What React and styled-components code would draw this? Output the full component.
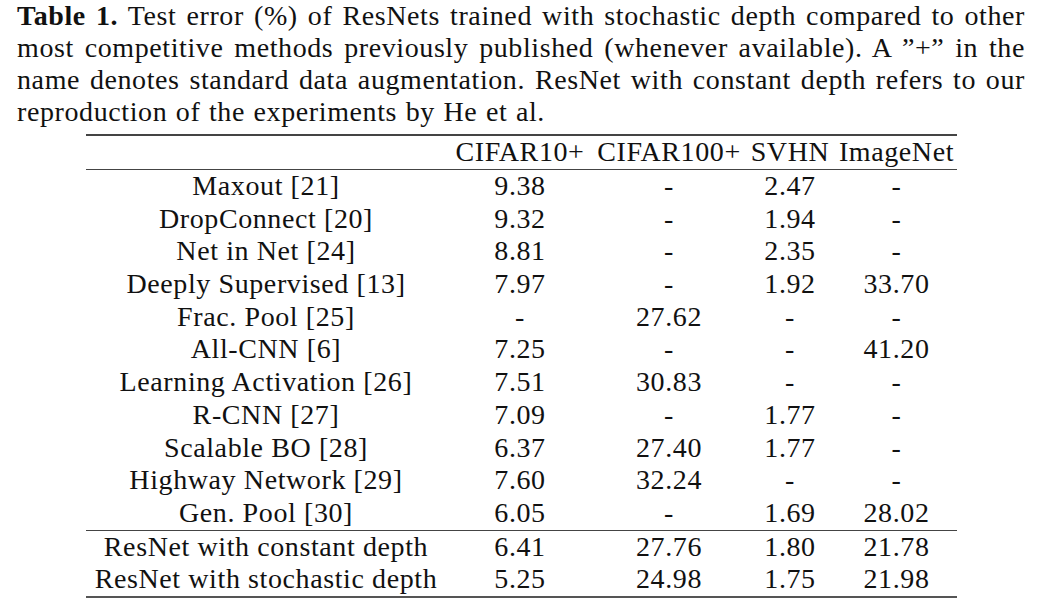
import React from 'react';
import styled, { createGlobalStyle } from 'styled-components';

const GlobalStyle = createGlobalStyle`
    html, body {
        margin: 0;
        padding: 0;
        background: #ffffff;
    }
    body {
        font-family: "Liberation Serif", "Times New Roman", serif;
        color: #111;
    }
`;

const Page = styled.div`
    width: 1044px;
    height: 605px;
    overflow: hidden;
    padding: 0 19px 0 17px;
    box-sizing: border-box;
    font-family: "Liberation Serif", "Times New Roman", serif;
`;

const Caption = styled.div`
    font-size: 28px;
    line-height: 32px;
    letter-spacing: 0.6px;
    word-spacing: 1px;
`;

const CaptionLine = styled.div`
    text-align: ${(p) => (p.$last ? 'left' : 'justify')};
    text-align-last: ${(p) => (p.$last ? 'left' : 'justify')};
    white-space: nowrap;
`;

const Bold = styled.b`
    font-weight: bold;
`;

// whole results table, laid out as a stack of grid rows
const Table = styled.div`
    margin: 6px 0 0 69px;
    width: 871px;
    font-size: 28px;
    letter-spacing: 0.6px;
    border-top: 2px solid #444;
    border-bottom: 2.5px solid #555;
`;

const Group = styled.div`
    border-top: ${(p) => (p.$rule ? '1.5px solid #444' : 'none')};
`;

const Row = styled.div`
    display: grid;
    grid-template-columns: 360px 148px 150px 92px 121px;
    align-items: center;
    height: ${(p) => (p.$head ? '33px' : '32.7px')};
`;

const Cell = styled.div`
    text-align: center;
    white-space: nowrap;
    padding-bottom: 5px;
`;

const captionLines = [
    <><Bold>Table 1.</Bold> Test error (%) of ResNets trained with stochastic depth compared to other</>,
    <>most competitive methods previously published (whenever available). A &rdquo;+&rdquo; in the</>,
    <>name denotes standard data augmentation. ResNet with constant depth refers to our</>,
    <>reproduction of the experiments by He et al.</>,
];

const header = ['', 'CIFAR10+', 'CIFAR100+', 'SVHN', 'ImageNet'];

const rows = [
    ['Maxout [21]', '9.38', '-', '2.47', '-'],
    ['DropConnect [20]', '9.32', '-', '1.94', '-'],
    ['Net in Net [24]', '8.81', '-', '2.35', '-'],
    ['Deeply Supervised [13]', '7.97', '-', '1.92', '33.70'],
    ['Frac. Pool [25]', '-', '27.62', '-', '-'],
    ['All-CNN [6]', '7.25', '-', '-', '41.20'],
    ['Learning Activation [26]', '7.51', '30.83', '-', '-'],
    ['R-CNN [27]', '7.09', '-', '1.77', '-'],
    ['Scalable BO [28]', '6.37', '27.40', '1.77', '-'],
    ['Highway Network [29]', '7.60', '32.24', '-', '-'],
    ['Gen. Pool [30]', '6.05', '-', '1.69', '28.02'],
];

const ours = [
    ['ResNet with constant depth', '6.41', '27.76', '1.80', '21.78'],
    ['ResNet with stochastic depth', '5.25', '24.98', '1.75', '21.98'],
];

const App = () => {
    return (
        <Page>
            <GlobalStyle />
            <Caption>
                {captionLines.map((line, i) => (
                    <CaptionLine key={i} $last={i === captionLines.length - 1}>
                        {line}
                    </CaptionLine>
                ))}
            </Caption>
            <Table>
                <Row $head>
                    {header.map((h, j) => <Cell key={j}>{h}</Cell>)}
                </Row>
                <Group $rule>
                    {rows.map((r) => (
                        <Row key={r[0]}>
                            {r.map((c, j) => <Cell key={j}>{c}</Cell>)}
                        </Row>
                    ))}
                </Group>
                <Group $rule>
                    {ours.map((r) => (
                        <Row key={r[0]}>
                            {r.map((c, j) => <Cell key={j}>{c}</Cell>)}
                        </Row>
                    ))}
                </Group>
            </Table>
        </Page>
    );
};

export default App;
